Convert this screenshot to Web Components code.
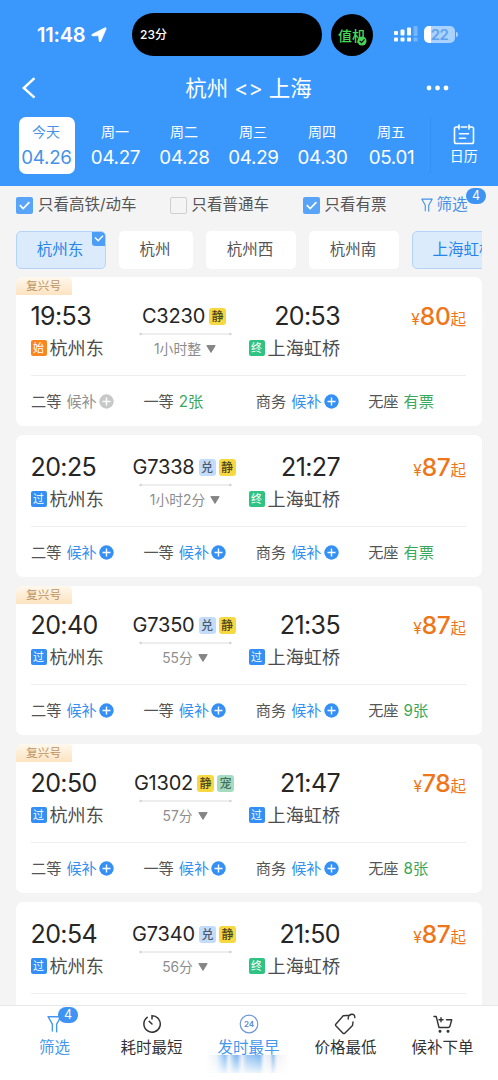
<!DOCTYPE html>
<html lang="zh-CN">
<head>
<meta charset="UTF-8">
<title>杭州 - 上海</title>
<style>
    html, body {
        margin: 0;
        height: 1080px;
        overflow: hidden;
    }
    body {
        --blue: #3a98fc;
        --green: #39a85b;
        font-family: Inter, "Noto Sans CJK SC", sans-serif;
        background: #f4f4f4;
        color: #555;
    }
</style>
</head>
<body>
<train-app></train-app>
<script>
function attach(el, html) {
    const shadow = el.attachShadow({ mode: 'open' });
    const template = document.createElement('template');
    template.innerHTML = html;
    shadow.appendChild(template.content.cloneNode(true));
}

const funnel = (w, h) => `
    <svg width="${w}" height="${h}" viewBox="0 0 14 16" fill="none" stroke="currentColor" stroke-width="1.3" stroke-linejoin="round" stroke-linecap="round">
        <path d="M5 14.6V8.2L1 1.2H13L9 8.2V15.2"/>
    </svg>`;

class StatusBar extends HTMLElement {
    constructor() {
        super();
        attach(this, `
            <style>
                :host {
                    display: flex;
                    align-items: center;
                    height: 43px;
                    padding: 13px 38px 10px 37px;
                    color: #fff;
                }
                .time { width: 95px; flex: none; display: flex; align-items: center; gap: 6px; font-size: 20px; font-weight: 600; letter-spacing: -0.2px; }
                .island { box-sizing: border-box; width: 190px; flex: none; height: 43px; border-radius: 22px; background: #000; padding-left: 8px; font-size: 12px; line-height: 43px; font-weight: 500; white-space: nowrap; }
                .round { width: 42px; height: 42px; flex: none; border-radius: 50%; background: #000; margin-left: 9px; display: grid; place-items: center; color: #45d957; font-size: 14px; font-weight: 500; position: relative; }
                .round svg { position: absolute; left: 26px; top: 22px; }
                .signal { margin-left: 20px; flex: none; }
                .battery { display: flex; align-items: center; margin-left: 6px; }
                .cell { width: 31px; height: 17px; border-radius: 5px; background: linear-gradient(90deg, #fff 7px, #a9d2fe 7px); color: #5fa3ec; font-size: 15px; line-height: 17px; text-align: center; font-weight: 600; letter-spacing: -0.5px; }
                .cap { width: 2px; height: 5px; margin-left: 1px; border-radius: 0 2px 2px 0; background: #a9d2fe; }
            </style>
            <div class="time"><span>11:48</span>
                <svg width="16" height="16" viewBox="0 0 16 16"><path d="M1.3 7.3 13.8.9Q15.6.2 15 2L9.8 14Q8.7 16 8.2 14L7.6 8.6 2 8.9Q-.2 8.4 1.3 7.3Z" fill="#fff" stroke="#fff" stroke-width=".8" stroke-linejoin="round"/></svg>
            </div>
            <div class="island">23分</div>
            <div class="round">值机
                <svg width="10" height="10" viewBox="0 0 10 10"><circle cx="5" cy="5" r="4.5" fill="#45d957"/><path d="m2.7 4.8 1.8 1.8 3-3.2" fill="none" stroke="#000" stroke-width="1.2"/></svg>
            </div>
            <svg class="signal" width="25" height="17" viewBox="0 0 25 17" fill="#fff">
                <rect x="1" y="5" width="4" height="4" rx="1"/><rect x="7.5" y="3.5" width="4" height="6" rx="1"/><rect x="14" y="1.5" width="4" height="8" rx="1"/>
                <rect x="1" y="11.5" width="4" height="4" rx="1"/><rect x="7.5" y="11.5" width="4" height="4" rx="1"/><rect x="14" y="11.5" width="4" height="4" rx="1"/>
                <g opacity=".3"><rect x="20.5" y="0" width="4" height="10" rx="1"/><rect x="20.5" y="11.5" width="4" height="4" rx="1"/></g>
            </svg>
            <div class="battery"><div class="cell">22</div><div class="cap"></div></div>
        `);
    }
}
customElements.define('status-bar', StatusBar);

class NavBar extends HTMLElement {
    constructor() {
        super();
        attach(this, `
            <style>
                :host { display: grid; grid-template-columns: 80px 1fr 80px; align-items: center; height: 44px; color: #fff; }
                .back { margin-left: 21px; display: block; }
                .title { text-align: center; font-size: 21.5px; line-height: 44px; white-space: nowrap; margin-right: 1px; }
                .more { justify-self: end; margin-right: 49px; }
            </style>
            <svg class="back" width="16" height="22" viewBox="0 0 16 22" fill="none" stroke="#fff" stroke-width="2.4"><path d="M13.5 1.2 2.8 11l10.7 9.6"/></svg>
            <div class="title"><slot></slot></div>
            <svg class="more" width="24" height="6" viewBox="0 0 24 6" fill="#fff"><circle cx="4" cy="3" r="2.4"/><circle cx="12.5" cy="3" r="2.4"/><circle cx="21" cy="3" r="2.4"/></svg>
        `);
    }
}
customElements.define('nav-bar', NavBar);

class DateItem extends HTMLElement {
    constructor() {
        super();
        attach(this, `
            <style>
                :host { display: block; width: 56px; height: 57px; border-radius: 7px; color: #fff; text-align: center; white-space: nowrap; }
                :host([active]) { background: #fff; color: #4592e6; }
                .day { font-size: 14px; line-height: 20px; padding-top: 5px; margin-left: -1px; }
                .date { font-size: 18.8px; line-height: 24px; padding-top: 4px; letter-spacing: -0.3px; margin: 0 -5px; }
            </style>
            <div class="day">${this.getAttribute('day')}</div>
            <div class="date"><slot></slot></div>
        `);
    }
}
customElements.define('date-item', DateItem);

class DateStrip extends HTMLElement {
    constructor() {
        super();
        attach(this, `
            <style>
                :host { display: flex; height: 69px; padding: 7px 0 0 18.5px; box-sizing: border-box; }
                .days { display: flex; gap: 13px; }
                .calendar { margin-left: 10px; flex: 1; height: 56px; border-left: 1px solid #3590f2; padding-right: 1px; color: #fff; font-size: 14px; text-align: center; }
                .calendar svg { display: block; margin: 7px auto 0; }
                .calendar div { line-height: 20px; margin-top: 1px; }
            </style>
            <div class="days"><slot></slot></div>
            <div class="calendar">
                <svg width="22" height="21" viewBox="0 0 22 21" fill="none" stroke="#fff" stroke-width="1.6" stroke-linecap="round"><path d="M5 3H3.2Q1.5 3 1.5 4.7V17.7Q1.5 19.5 3.2 19.5H18.8Q20.5 19.5 20.5 17.7V4.7Q20.5 3 18.8 3H17M8.2 3H13.8M6 1V5M16 1V5M6.5 9.8H15.5M6.5 14.2H12.5"/></svg>
                <div>日历</div>
            </div>
        `);
    }
}
customElements.define('date-strip', DateStrip);

class CheckOption extends HTMLElement {
    constructor() {
        super();
        attach(this, `
            <style>
                :host { display: flex; align-items: center; gap: 5px; font-size: 15.5px; line-height: 22px; white-space: nowrap; }
                i { width: 17px; height: 17px; box-sizing: border-box; border: 1px solid #cfcfcf; border-radius: 2px; }
                svg { display: none; width: 17px; height: 17px; }
                :host([checked]) i { background: #57a4f8; border: 0; }
                :host([checked]) svg { display: block; }
            </style>
            <i><svg viewBox="0 0 17 17" fill="none" stroke="#fff" stroke-width="1.7"><path d="m3.8 8.2 3.4 3.4 6.2-6.4"/></svg></i>
            <span><slot></slot></span>
        `);
    }
}
customElements.define('check-option', CheckOption);

class CountBadge extends HTMLElement {
    constructor() {
        super();
        attach(this, `
            <style>
                :host { display: block; width: 20px; height: 16px; border-radius: 8px; background: #3f94f3; color: #fff; font-size: 12.5px; line-height: 16px; text-align: center; }
            </style>
            <slot></slot>
        `);
    }
}
customElements.define('count-badge', CountBadge);

class FilterRow extends HTMLElement {
    constructor() {
        super();
        attach(this, `
            <style>
                :host { display: flex; align-items: center; height: 38px; padding: 0 0 1px 16px; }
                check-option:nth-of-type(1) { width: 153.5px; }
                check-option:nth-of-type(2) { width: 133px; }
                check-option:nth-of-type(3) { width: 118px; }
                .filter { display: flex; align-items: center; gap: 4px; color: #4591e8; font-size: 15.5px; line-height: 22px; position: relative; }
                count-badge { position: absolute; left: 45.5px; top: -6px; }
            </style>
            <check-option checked>只看高铁/动车</check-option>
            <check-option>只看普通车</check-option>
            <check-option checked>只看有票</check-option>
            <div class="filter">${funnel(12, 14)}<span>筛选</span><count-badge>4</count-badge></div>
        `);
    }
}
customElements.define('filter-row', FilterRow);

class StationChip extends HTMLElement {
    constructor() {
        super();
        attach(this, `
            <style>
                :host { display: block; flex: none; box-sizing: border-box; width: 90px; height: 38px; border-radius: 5px; background: #fff; font-size: 15.5px; line-height: 38px; text-align: center; text-indent: -2px; white-space: nowrap; position: relative; }
                :host([selected]) { background: #dcebfc; border: 1px solid #b3d4f8; line-height: 36px; color: #2585eb; }
                svg { display: none; position: absolute; right: 0; top: 0; }
                :host([selected]) svg { display: block; }
            </style>
            <slot></slot>
            <svg width="13" height="14" viewBox="0 0 13 14"><path d="M0 0H9Q13 0 13 4V14H3Q0 14 0 11Z" fill="#4b9df5"/><path d="m3 5.5 3.2 3.2 4.8-4.9" fill="none" stroke="#fff" stroke-width="1.5"/></svg>
        `);
    }
}
customElements.define('station-chip', StationChip);

class StationChips extends HTMLElement {
    constructor() {
        super();
        attach(this, `
            <style>
                :host { display: flex; gap: 13px; margin: 6px 16px 8px; overflow: hidden; }
            </style>
            <slot></slot>
        `);
    }
}
customElements.define('station-chips', StationChips);

class StopName extends HTMLElement {
    constructor() {
        super();
        const colors = { '始': '#fb851f', '过': '#338ff5', '终': '#2fc383' };
        const kind = this.getAttribute('kind');
        attach(this, `
            <style>
                :host { display: flex; align-items: center; gap: 3px; height: 26px; font-size: 18.1px; line-height: 26px; color: #4c4c4c; white-space: nowrap; }
                b { width: 16px; height: 16px; border-radius: 2px; background: ${colors[kind]}; color: #fff; font-size: 11px; line-height: 16px; font-weight: 400; text-align: center; }
            </style>
            <b>${kind}</b><span><slot></slot></span>
        `);
    }
}
customElements.define('stop-name', StopName);

class ServiceMark extends HTMLElement {
    constructor() {
        super();
        const colors = { '静': ['#f6d840', '#4d4420'], '兑': ['#c3dcf9', '#4a5a70'], '宠': ['#a5dcc0', '#47705c'] };
        const mark = this.getAttribute('mark');
        attach(this, `
            <style>
                :host { display: block; width: 17px; height: 17px; border-radius: 3px; background: ${colors[mark][0]}; color: ${colors[mark][1]}; font-size: 12px; line-height: 17px; font-weight: 500; letter-spacing: 0; text-align: center; }
            </style>
            ${mark}
        `);
    }
}
customElements.define('service-mark', ServiceMark);

class SeatInfo extends HTMLElement {
    constructor() {
        super();
        const value = this.getAttribute('value');
        const closed = value === '候补-';
        const wait = value.startsWith('候补');
        const color = closed ? '#929292' : wait ? '#3590f0' : 'var(--green)';
        const plus = `<svg width="15" height="15" viewBox="0 0 15 15"><circle cx="7.5" cy="7.5" r="7.2" fill="${closed ? '#c8c8c8' : '#3590f5'}"/><path d="M7.5 3.5V11.5M3.5 7.5H11.5" stroke="#fff" stroke-width="1.4"/></svg>`;
        attach(this, `
            <style>
                :host { display: flex; align-items: center; width: 112.4px; flex: none; font-size: 15.2px; line-height: 22px; white-space: nowrap; }
                .value { color: ${color}; margin: 0 2px 0 5px; }
                svg { margin-bottom: 1px; }
            </style>
            <span><slot></slot></span><span class="value">${value.replace('-', '')}</span>${wait ? plus : ''}
        `);
    }
}
customElements.define('seat-info', SeatInfo);

class TrainCard extends HTMLElement {
    constructor() {
        super();
        const get = name => this.getAttribute(name);
        const names = ['二等', '一等', '商务', '无座'];
        const seats = (get('seats') || '').split(',').filter(Boolean);
        attach(this, `
            <style>
                :host { display: block; box-sizing: border-box; flex: none; height: 142px; border-radius: 7px; background: #fff; padding: 16px 16px 0 15px; overflow: hidden; }
                :host([fuxing]) { height: 149px; padding-top: 0; }
                .tag { width: 56px; height: 18px; margin: 0 0 5px -15px; background: linear-gradient(#fff8ee, #fde3c1); border-radius: 0 3px 0 0; color: #bb9463; font-size: 11.7px; line-height: 18px; text-indent: 10px; }
                .trip { display: flex; height: 75px; }
                .from, .to { width: 108px; }
                .to { display: flex; flex-direction: column; align-items: flex-end; }
                .time { font-size: 25px; line-height: 33px; height: 33px; letter-spacing: -0.6px; color: #262626; white-space: nowrap; }
                .from .time { margin-left: -0.5px; }
                .mid { width: 93px; display: flex; flex-direction: column; align-items: center; }
                .train { display: flex; align-items: center; justify-content: center; gap: 3px; height: 32px; margin-left: -3px; font-size: 20px; letter-spacing: -0.2px; color: #262626; }
                .train span { margin-right: 1px; }
                .rule { width: 93px; height: 4px; display: block; }
                .duration { display: flex; align-items: center; gap: 5px; font-size: 13.8px; line-height: 20px; margin: 3px 1px 0 0; color: #8c8c8c; white-space: nowrap; }
                stop-name { margin-top: 2px; margin-left: -0.5px; }
                .price { flex: 1; text-align: right; color: #ee761a; font-size: 15.5px; line-height: 32px; white-space: nowrap; }
                .price b { font-size: 24.5px; font-weight: 500; letter-spacing: -0.3px; }
                .seats { display: flex; border-top: 1px solid #eee; padding-top: 15px; }
            </style>
            ${this.hasAttribute('fuxing') ? '<div class="tag">复兴号</div>' : ''}
            <div class="trip">
                <div class="from">
                    <div class="time">${get('depart')}</div>
                    <stop-name kind="${get('from-kind')}">杭州东</stop-name>
                </div>
                <div class="mid">
                    <div class="train"><span>${get('number')}</span>${[...get('marks')].map(m => `<service-mark mark="${m}"></service-mark>`).join('')}</div>
                    <svg class="rule" viewBox="0 0 93 4"><path d="M1 2H92" stroke="#dcdcdc"/><circle cx="1.6" cy="2" r="1.3" fill="#d4d4d4"/><circle cx="91.4" cy="2" r="1.3" fill="#d4d4d4"/></svg>
                    <div class="duration"><span>${get('duration')}</span><svg width="10" height="8" viewBox="0 0 10 8"><path d="M.8.6H9.2L5 7.4Z" fill="#858585" stroke="#858585" stroke-linejoin="round"/></svg></div>
                </div>
                <div class="to">
                    <div class="time">${get('arrive')}</div>
                    <stop-name kind="${get('to-kind')}">上海虹桥</stop-name>
                </div>
                <div class="price">¥<b>${get('price')}</b>起</div>
            </div>
            <div class="seats">${seats.map((s, i) => `<seat-info value="${s}">${names[i]}</seat-info>`).join('')}</div>
        `);
    }
}
customElements.define('train-card', TrainCard);

class TabItem extends HTMLElement {
    constructor() {
        super();
        const icons = {
            filter: funnel(15, 18),
            clock: `<svg width="20" height="20" viewBox="0 0 20 20" fill="none" stroke="currentColor" stroke-width="1.5" stroke-linecap="round"><path d="M5.2 3.4A8.2 8.2 0 1 0 10 1.8V5M7.2 7.4 10 10"/></svg>`,
            early: `<svg width="20" height="20" viewBox="0 0 20 20"><circle cx="10" cy="10" r="8.8" fill="none" stroke="#6f97d8" stroke-width="1.2"/><text x="10" y="13" text-anchor="middle" font-size="8" font-weight="600" fill="#5488d2">24</text></svg>`,
            price: `<svg width="23" height="22" viewBox="0 0 23 22" fill="none" stroke="currentColor" stroke-width="1.4" stroke-linejoin="round" stroke-linecap="round"><path d="M14.2 6Q14 2 17.6 1.3Q21 1 20.8 4.6M16 2.2 9.2 2.8 1.8 11.2Q1.2 12 1.8 12.7L9 20.2Q10 21 10.8 20.2L18.5 12.5 19 9"/></svg>`,
            cart: `<svg width="20" height="18" viewBox="0 0 20 18" fill="none" stroke="currentColor" stroke-width="1.4" stroke-linecap="round" stroke-linejoin="round"><path d="M1 1.5H3.2L6 12.5H15.2Q16.6 12.5 17 11L18.7 4.8H13.5M8 2.8V6.8M6 4.8H10"/><circle cx="7" cy="16.2" r=".8" fill="currentColor"/><circle cx="15" cy="16.2" r=".8" fill="currentColor"/></svg>`
        };
        attach(this, `
            <style>
                :host { display: flex; flex-direction: column; align-items: center; width: 97px; flex: none; color: #333; font-size: 15.5px; white-space: nowrap; position: relative; }
                :host([active]) { color: #4598ec; }
                .icon { height: 24px; margin-top: 6px; display: flex; align-items: center; }
                .label { line-height: 22px; margin-top: 1px; }
                ::slotted(count-badge) { position: absolute; left: 52px; top: 1px; }
            </style>
            <div class="icon">${icons[this.getAttribute('icon')]}</div>
            <div class="label">${this.getAttribute('label')}</div>
            <slot></slot>
        `);
    }
}
customElements.define('tab-item', TabItem);

class TabBar extends HTMLElement {
    constructor() {
        super();
        attach(this, `
            <style>
                :host { display: flex; box-sizing: border-box; height: 75px; flex: none; padding-left: 6px; background: #fff; border-top: 1px solid #e8e8e8; position: relative; }
                .smear { position: absolute; left: 206px; top: 49px; width: 84px; height: 18px; filter: blur(0.7px); background: linear-gradient(rgba(255,255,255,0), rgba(255,255,255,.85)), linear-gradient(90deg, #fff, #eef3f8 10px, #cde4fa 13px, #87bdf5 19px, #e8eef4 23px, #8fc1f4 28px, #7bb5ef 31px, #e5ecf4 36px, #9fc9f2 41px, #7db7f0 54px, #eef2f8 58px, #e6ebf2 64px, #8fbeee 67px, #f1f1f4 71px, #fff 84px); }
            </style>
            <slot></slot>
            <div class="smear"></div>
        `);
    }
}
customElements.define('tab-bar', TabBar);

class TrainApp extends HTMLElement {
    constructor() {
        super();
        attach(this, `
            <style>
                :host { display: flex; flex-direction: column; width: 498px; height: 1080px; overflow: hidden; }
                header { background: var(--blue); height: 186px; flex: none; }
                .list { flex: 1; min-height: 0; overflow: hidden; display: flex; flex-direction: column; gap: 9px; padding: 0 16px; }
            </style>
            <header>
                <status-bar></status-bar>
                <nav-bar>杭州 &lt;&gt; 上海</nav-bar>
                <date-strip>
                    <date-item day="今天" active>04.26</date-item>
                    <date-item day="周一">04.27</date-item>
                    <date-item day="周二">04.28</date-item>
                    <date-item day="周三">04.29</date-item>
                    <date-item day="周四">04.30</date-item>
                    <date-item day="周五">05.01</date-item>
                </date-strip>
            </header>
            <filter-row></filter-row>
            <station-chips>
                <station-chip selected>杭州东</station-chip>
                <station-chip style="width: 74px">杭州</station-chip>
                <station-chip>杭州西</station-chip>
                <station-chip>杭州南</station-chip>
                <station-chip selected style="width: 105px">上海虹桥</station-chip>
            </station-chips>
            <div class="list">
                <train-card fuxing depart="19:53" arrive="20:53" number="C3230" marks="静" duration="1小时整" from-kind="始" to-kind="终" price="80" seats="候补-,2张,候补,有票"></train-card>
                <train-card depart="20:25" arrive="21:27" number="G7338" marks="兑静" duration="1小时2分" from-kind="过" to-kind="终" price="87" seats="候补,候补,候补,有票"></train-card>
                <train-card fuxing depart="20:40" arrive="21:35" number="G7350" marks="兑静" duration="55分" from-kind="过" to-kind="过" price="87" seats="候补,候补,候补,9张"></train-card>
                <train-card fuxing depart="20:50" arrive="21:47" number="G1302" marks="静宠" duration="57分" from-kind="过" to-kind="过" price="78" seats="候补,候补,候补,8张"></train-card>
                <train-card depart="20:54" arrive="21:50" number="G7340" marks="兑静" duration="56分" from-kind="过" to-kind="终" price="87"></train-card>
            </div>
            <tab-bar>
                <tab-item icon="filter" label="筛选" active><count-badge>4</count-badge></tab-item>
                <tab-item icon="clock" label="耗时最短"></tab-item>
                <tab-item icon="early" label="发时最早" active></tab-item>
                <tab-item icon="price" label="价格最低"></tab-item>
                <tab-item icon="cart" label="候补下单"></tab-item>
            </tab-bar>
        `);
    }
}
customElements.define('train-app', TrainApp);
</script>
</body>
</html>
